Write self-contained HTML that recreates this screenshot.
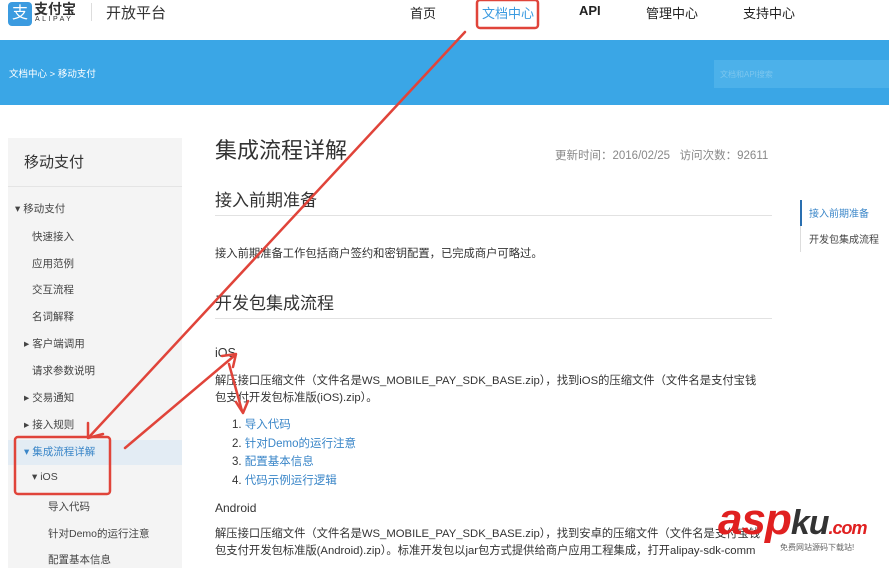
<!DOCTYPE html>
<html><head><meta charset="utf-8"><style>
*{margin:0;padding:0;box-sizing:border-box}
body{width:889px;height:560px;overflow:hidden;background:#fff;font-family:"Liberation Sans","Noto Sans CJK SC",sans-serif;color:#333;position:relative}
.a{position:absolute;white-space:nowrap}
.nav{font-size:13px;color:#222;top:3px}
.side{position:absolute;left:8px;top:138px;width:174px;height:430px;background:#f4f4f4}
.si{position:absolute;font-size:10.5px;color:#444}
p.t{font-size:11.3px;color:#333;line-height:17px}
.lk{color:#3a86c8}
</style></head><body>
<div class="a" style="left:8px;top:2px;width:24px;height:24px;background:#3b9be0;border-radius:4px;color:#fff;font-size:16px;text-align:center;line-height:24px">支</div>
<div class="a" style="left:34px;top:-1px;font-size:14px;font-weight:bold;color:#333">支付宝</div>
<div class="a" style="left:35px;top:16px;font-size:7px;letter-spacing:2.5px;color:#333">ALIPAY</div>
<div class="a" style="left:91px;top:3px;width:1px;height:18px;background:#ddd"></div>
<div class="a" style="left:106px;top:2px;font-size:15px;color:#333">开放平台</div>
<div class="a nav" style="left:410px">首页</div>
<div class="a nav" style="left:482px;color:#3a9ae0">文档中心</div>
<div class="a nav" style="left:579px;font-weight:bold">API</div>
<div class="a nav" style="left:646px">管理中心</div>
<div class="a nav" style="left:743px">支持中心</div>
<div class="a" style="left:0;top:40px;width:889px;height:65px;background:#3aa6e6"></div>
<div class="a" style="left:9px;top:66px;font-size:9.5px;color:#fff">文档中心 &gt; 移动支付</div>
<div class="a" style="left:714px;top:60px;width:175px;height:28px;background:#4cb1ea"></div>
<div class="a" style="left:720px;top:69px;font-size:8px;color:#7cc6ee">文档和API搜索</div>
<div class="side"></div>
<div class="a" style="left:24px;top:151px;font-size:15px;color:#333">移动支付</div>
<div class="a" style="left:8px;top:186px;width:174px;height:1px;background:#e4e4e4"></div>
<div class="a" style="left:8px;top:440px;width:174px;height:25px;background:#e3ecf4"></div>
<div class="si" style="left:15px;top:201px">▾ 移动支付</div>
<div class="si" style="left:32px;top:229px">快速接入</div>
<div class="si" style="left:32px;top:256px">应用范例</div>
<div class="si" style="left:32px;top:282px">交互流程</div>
<div class="si" style="left:32px;top:309px">名词解释</div>
<div class="si" style="left:24px;top:336px">▸ 客户端调用</div>
<div class="si" style="left:32px;top:363px">请求参数说明</div>
<div class="si" style="left:24px;top:390px">▸ 交易通知</div>
<div class="si" style="left:24px;top:417px">▸ 接入规则</div>
<div class="si" style="left:24px;top:444px;color:#3a86c8">▾ 集成流程详解</div>
<div class="si" style="left:32px;top:471px">▾ iOS</div>
<div class="si" style="left:48px;top:499px">导入代码</div>
<div class="si" style="left:48px;top:526px">针对Demo的运行注意</div>
<div class="si" style="left:48px;top:552px">配置基本信息</div>
<div class="a" style="left:215px;top:133px;font-size:22px;color:#333">集成流程详解</div>
<div class="a" style="left:555px;top:147px;font-size:11.5px;color:#888">更新时间：2016/02/25 &nbsp;&nbsp;访问次数：92611</div>
<div class="a" style="left:215px;top:186px;font-size:17px;color:#333">接入前期准备</div>
<div class="a" style="left:215px;top:215px;width:557px;height:1px;background:#e2e2e2"></div>
<div class="a" style="left:215px;top:245px;font-size:11.3px">接入前期准备工作包括商户签约和密钥配置，已完成商户可略过。</div>
<div class="a" style="left:215px;top:289px;font-size:17px;color:#333">开发包集成流程</div>
<div class="a" style="left:215px;top:318px;width:557px;height:1px;background:#e2e2e2"></div>
<div class="a" style="left:215px;top:346px;font-size:12.5px">iOS</div>
<div class="a" style="left:215px;top:373px"><p class="t">解压接口压缩文件（文件名是WS_MOBILE_PAY_SDK_BASE.zip），找到iOS的压缩文件（文件名是支付宝钱<br>包支付开发包标准版(iOS).zip）。</p></div>
<div class="a" style="left:232px;top:416px;font-size:11.5px;line-height:18.5px">1. <span class="lk">导入代码</span><br>2. <span class="lk">针对Demo的运行注意</span><br>3. <span class="lk">配置基本信息</span><br>4. <span class="lk">代码示例运行逻辑</span></div>
<div class="a" style="left:215px;top:501px;font-size:12px">Android</div>
<div class="a" style="left:215px;top:526px"><p class="t">解压接口压缩文件（文件名是WS_MOBILE_PAY_SDK_BASE.zip），找到安卓的压缩文件（文件名是支付宝钱<br>包支付开发包标准版(Android).zip）。标准开发包以jar包方式提供给商户应用工程集成，打开alipay-sdk-comm</p></div>
<div class="a" style="left:800px;top:200px;width:2px;height:26px;background:#2a6fb0"></div>
<div class="a" style="left:800px;top:226px;width:1px;height:26px;background:#ddd"></div>
<div class="a" style="left:809px;top:205px;font-size:10px;color:#3a86c8">接入前期准备</div>
<div class="a" style="left:809px;top:231px;font-size:10px;color:#444">开发包集成流程</div>
<div class="a" style="left:718px;top:495px;font-size:44px;font-weight:bold;font-style:italic;color:#e02020;letter-spacing:-1px">asp<span style="color:#333;font-size:34px">ku</span><span style="font-size:18px;color:#e02020">.com</span></div>
<div class="a" style="left:780px;top:542px;font-size:8px;color:#666">免费网站源码下载站!</div>
<svg class="a" style="left:0;top:0" width="889" height="560">
<g stroke="#e0443a" stroke-width="2.5" fill="none" stroke-linecap="round" stroke-linejoin="round">
<rect x="477" y="0" width="61" height="28" rx="3"/>
<rect x="15" y="437" width="95" height="57" rx="3"/>
<line x1="465" y1="32" x2="90" y2="436"/>
<polyline points="88,423 88,438 103,434"/>
<line x1="125" y1="448" x2="234" y2="356"/>
<polyline points="222,356 236,354 233,367"/>
<line x1="229" y1="364" x2="242" y2="411"/>
<polyline points="236,402 243,413 248,401"/>
</g></svg>
</body></html>
